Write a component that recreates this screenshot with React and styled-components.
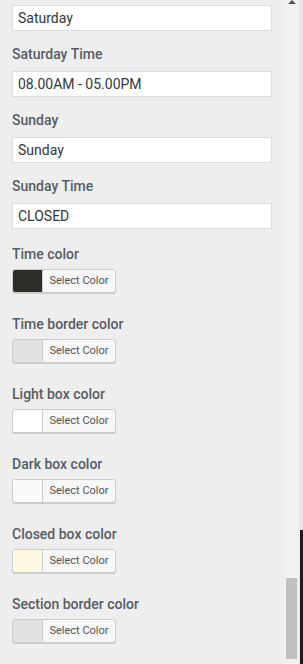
import React from 'react';
import styled, { createGlobalStyle } from 'styled-components';

const GlobalStyle = createGlobalStyle`
   html, body {
      margin: 0;
      padding: 0;
      height: 664px;
      overflow: hidden;
      background: #eeeeee;
   }
   * {
      box-sizing: border-box;
   }
`;

const textFields = [
   { label: null, value: 'Saturday' },
   { label: 'Saturday Time', value: '08.00AM - 05.00PM' },
   { label: 'Sunday', value: 'Sunday' },
   { label: 'Sunday Time', value: 'CLOSED' },
];

const colorFields = [
   { label: 'Time color', color: '#2c2d28' },
   { label: 'Time border color', color: '#e2e2e2' },
   { label: 'Light box color', color: '#ffffff' },
   { label: 'Dark box color', color: '#fafafa' },
   { label: 'Closed box color', color: '#fff8e1' },
   { label: 'Section border color', color: '#e2e2e2' },
];

const App = () => {
   return (
      <Screen>
         <GlobalStyle />
         <Panel>
            {textFields.map((f, i) => (
               <Field key={i}>
                  {f.label && <Label>{f.label}</Label>}
                  <TextInput type="text" defaultValue={f.value} />
               </Field>
            ))}
            {colorFields.map((f) => (
               <ColorField key={f.label}>
                  <Label>{f.label}</Label>
                  <ColorButton>
                     <Swatch $color={f.color} />
                     <ButtonText>Select Color</ButtonText>
                  </ColorButton>
               </ColorField>
            ))}
         </Panel>
         <Scrollbar>
            <ArrowUp />
            <Thumb />
         </Scrollbar>
         <Edge>
            <EdgeDark />
         </Edge>
      </Screen>
   );
};

const Screen = styled.div`
   display: flex;
   flex-direction: row;
   width: 303px;
   height: 664px;
   background: #eeeeee;
   font-family: Roboto, 'Liberation Sans', sans-serif;
`;

const Panel = styled.div`
   flex: 1;
   padding: 5px 12px 0 12px;
`;

const Field = styled.div`
   display: flex;
   flex-direction: column;
   & + & {
      margin-top: 15px;
   }
`;

const ColorField = styled.div`
   display: flex;
   flex-direction: column;
   margin-top: 17px;
   & + & {
      margin-top: 23px;
   }
`;

const Label = styled.span`
   display: block;
   font-size: 14px;
   font-weight: 500;
   line-height: 16px;
   color: #555d66;
   margin-bottom: 9px;
   ${ColorField} & {
      margin-bottom: 7px;
   }
`;

const TextInput = styled.input`
   width: 260px;
   height: 26px;
   margin: 0;
   padding: 0 5px;
   border: 1px solid #dddddd;
   background: #ffffff;
   font-family: Roboto, 'Liberation Sans', sans-serif;
   font-size: 14px;
   color: #32373c;
   outline: none;
`;

const ColorButton = styled.div`
   display: flex;
   flex-direction: row;
   width: 104px;
   height: 24px;
   border: 1px solid #cccccc;
   border-radius: 3px;
   box-shadow: 0 1px 0 #cccccc;
   background: #f7f7f7;
   overflow: hidden;
`;

const Swatch = styled.span`
   width: 30px;
   height: 100%;
   background: ${(p) => p.$color};
   border-right: 1px solid #cccccc;
`;

const ButtonText = styled.span`
   flex: 1;
   display: flex;
   align-items: center;
   justify-content: center;
   font-size: 11px;
   color: #555555;
   padding-bottom: 1px;
`;

const Scrollbar = styled.div`
   width: 15px;
   height: 100%;
   background: #f1f1f1;
   display: flex;
   flex-direction: column;
   align-items: center;
   justify-content: space-between;
   padding-bottom: 5px;
`;

const ArrowUp = styled.span`
   width: 0;
   height: 0;
   border-left: 4px solid transparent;
   border-right: 4px solid transparent;
   border-bottom: 4px solid #505050;
`;

const Thumb = styled.span`
   width: 11px;
   height: 81px;
   background: #c1c1c1;
`;

const Edge = styled.div`
   width: 4px;
   height: 100%;
   background: #e6e6e6;
   display: flex;
   flex-direction: column;
   justify-content: flex-end;
`;

const EdgeDark = styled.span`
   height: 134px;
   background: #1e1e1e;
   margin-left: 1px;
`;

export default App;
